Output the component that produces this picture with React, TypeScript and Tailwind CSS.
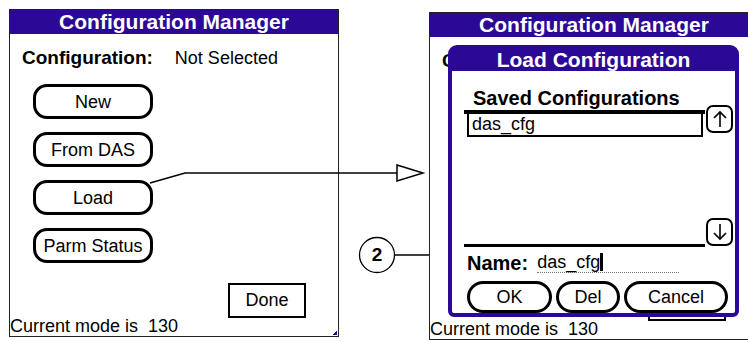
import React from "react";

const font = { fontFamily: '"Liberation Sans", Arial, sans-serif' };

function PillButton({ label, className = "" }: { label: string; className?: string }) {
  return (
    <div
      className={`flex items-center justify-center border-[3px] border-black rounded-[14px] bg-white text-[18px] leading-none text-black ${className}`}
    >
      {label}
    </div>
  );
}

function Screen() {
  return (
    <div className="w-[330px] h-[328px] border border-[#222] bg-white flex flex-col relative overflow-hidden">
      <div className="h-[24px] bg-[#2c0896] text-white font-bold text-[21px] leading-[24px] text-center">
        Configuration Manager
      </div>
      <div className="mt-[14px] ml-[12px] text-[18px] leading-[20px] text-black">
        <span className="font-bold text-[19px]">Configuration:</span>
        <span className="ml-[22px]">Not Selected</span>
      </div>
      <div className="mt-[16px] ml-[23px] flex flex-col gap-[13px]">
        <PillButton label="New" className="w-[120px] h-[35px]" />
        <PillButton label="From DAS" className="w-[120px] h-[35px]" />
        <PillButton label="Load" className="w-[120px] h-[35px]" />
        <PillButton label="Parm Status" className="w-[120px] h-[35px]" />
      </div>
      <div className="mt-auto self-end mr-[32px] w-[78px] h-[35px] border-2 border-black flex items-center justify-center text-[18px] text-black">
        Done
      </div>
      <div className="-mt-[1px] text-[18px] leading-[18px] text-black whitespace-pre pb-[1px]">
        Current mode is  130
      </div>
      <div className="absolute right-[1px] bottom-[1px] w-[4px] h-[4px] bg-[linear-gradient(135deg,transparent_50%,#2c0896_50%)]" />
    </div>
  );
}

function ScrollButton({ dir }: { dir: "up" | "down" }) {
  return (
    <div className="w-[27px] h-[28px] border-2 border-black rounded-[7px] bg-white flex items-center justify-center">
      <svg width="16" height="20" viewBox="0 0 16 20" fill="none" stroke="black" strokeWidth="1.6">
        {dir === "up" ? (
          <>
            <path d="M8 18V3" />
            <path d="M2 9l6-6 6 6" />
          </>
        ) : (
          <>
            <path d="M8 2v15" />
            <path d="M2 11l6 6 6-6" />
          </>
        )}
      </svg>
    </div>
  );
}

function LoadDialog() {
  return (
    <div className="w-[291px] h-[272px] border-[4px] border-[#2c0896] rounded-t-[9px] rounded-b-[6px] bg-white flex flex-col">
      <div className="h-[24px] bg-[#2c0896] text-white font-bold text-[21px] leading-[22px] text-center">
        Load Configuration
      </div>
      <div className="mt-[17px] ml-[21px] font-bold text-[20px] leading-[20px] text-black">
        Saved Configurations
      </div>
      <div className="flex ml-[12px] mt-[-3px]">
        <div className="w-[241px] flex flex-col">
          <div className="h-[4px] bg-black mt-[5px]" />
          <div className="h-[23px] w-[236px] ml-[3px] border-2 border-t-0 border-black text-[18px] leading-[20px] pl-[3px] text-black">
            das_cfg
          </div>
          <div className="h-[107px]" />
          <div className="h-[3px] bg-black" />
        </div>
        <div className="ml-[1px] flex flex-col justify-between">
          <ScrollButton dir="up" />
          <div className="mb-[1px]">
            <ScrollButton dir="down" />
          </div>
        </div>
      </div>
      <div className="mt-[5px] ml-[15px] flex items-end text-[18px] leading-[20px] text-black">
        <span className="font-bold text-[20px]">Name:</span>
        <div className="ml-[9px] w-[142px] border-b border-dotted border-[#777] flex items-center">
          <span>das_cfg</span>
          <span className="w-[3px] h-[18px] bg-black" />
        </div>
      </div>
      <div className="mt-[8px] ml-[15px] flex gap-[4px]">
        <PillButton label="OK" className="w-[85px] h-[32px] rounded-[16px]" />
        <PillButton label="Del" className="w-[64px] h-[32px] rounded-[16px]" />
        <PillButton label="Cancel" className="w-[104px] h-[32px] rounded-[16px]" />
      </div>
    </div>
  );
}

export default function App() {
  return (
    <div className="relative w-[748px] h-[341px] bg-white overflow-hidden" style={font}>
      <div className="absolute left-[9px] top-[9px]">
        <Screen />
      </div>
      <div className="absolute left-[429px] top-[12px]">
        <Screen />
        <div className="absolute left-[19px] top-[33px]">
          <LoadDialog />
        </div>
      </div>
      <svg className="absolute left-0 top-0" width="748" height="341" fill="none" stroke="black">
        <polyline points="150,183 185,173 397,173" strokeWidth="1.5" />
        <polygon points="397,165 423,173 397,181" strokeWidth="1.5" fill="white" />
        <circle cx="377" cy="255" r="17.5" strokeWidth="1.3" fill="white" />
        <line x1="394.5" y1="255" x2="429" y2="255" strokeWidth="1.5" />
      </svg>
      <div className="absolute left-[360px] top-[242px] w-[34px] h-[26px] flex items-center justify-center font-bold text-[19px] text-black">
        2
      </div>
    </div>
  );
}
